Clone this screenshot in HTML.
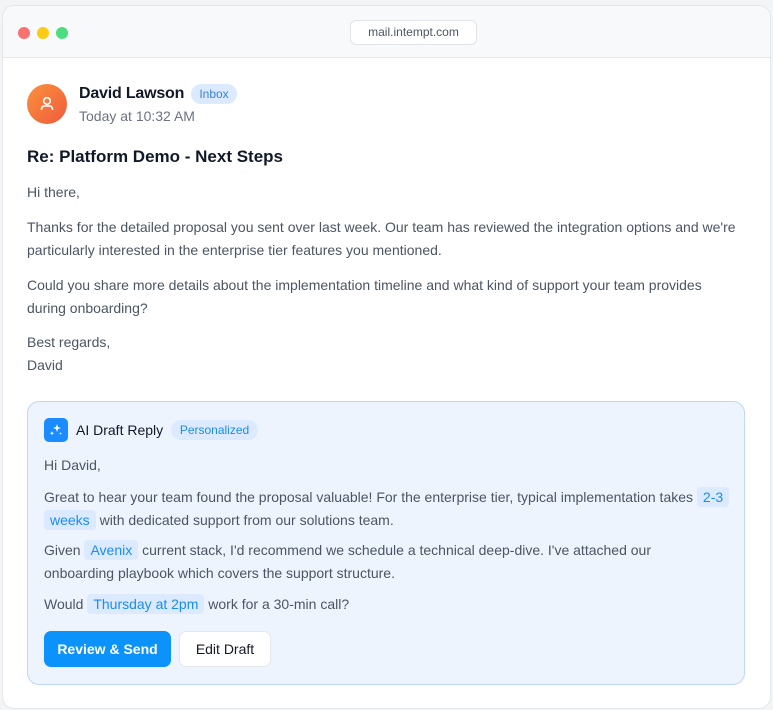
<!DOCTYPE html>
<html><head><meta charset="utf-8"><style>
*{margin:0;padding:0;box-sizing:border-box}
body{width:773px;height:710px;background:#f3f4f6;font-family:"Liberation Sans",sans-serif;position:relative;overflow:hidden;color:#4b5563}
.win{position:absolute;left:2px;top:5px;width:769px;height:704px;background:#fff;border:1px solid #e5e7eb;border-radius:12px;overflow:hidden}
.bar{height:52px;background:#f8f9fb;border-bottom:1px solid #e5e7eb;position:relative}
.dot{position:absolute;top:21px;width:12px;height:12px;border-radius:50%}
.url{position:absolute;left:347px;top:14px;width:127px;height:25px;border:1px solid #e2e4e8;border-radius:6px;background:#fff;font-size:12px;color:#4b5563;text-align:center;line-height:23px}
.a{position:absolute}
p.t{position:absolute;left:24px;font-size:14px;line-height:23px;color:#4b5563;white-space:nowrap}
.box{position:absolute;left:24px;top:395px;width:718px;height:284px;background:#eef4fe;border:1px solid #bcd7f8;border-radius:12px}
.h{background:#dbeafe;color:#1b8cf5;padding:2px 6px;border-radius:4px}
</style></head><body>
<div class="win">
<div class="bar">
<div class="dot" style="left:15px;background:#f87171"></div>
<div class="dot" style="left:34px;background:#facc15"></div>
<div class="dot" style="left:53px;background:#4ade80"></div>
<div class="url">mail.intempt.com</div>
</div>
<div class="a" style="left:24px;top:78px;width:40px;height:40px;border-radius:50%;background:linear-gradient(135deg,#fb923c,#ef5a3c)">
<svg width="40" height="40" viewBox="0 0 40 40" fill="none" stroke="#fff" stroke-width="1.6"><circle cx="20" cy="17" r="3.3"/><path d="M14.5 26v-1a3 3 0 0 1 3-3h5a3 3 0 0 1 3 3v1"/></svg></div>
<div class="a" style="left:76px;top:79px;font-size:16px;font-weight:bold;color:#111827;letter-spacing:-0.2px">David Lawson</div>
<div class="a" style="left:188px;top:78px;width:46px;height:20px;border-radius:10px;background:#dbeafe;color:#3b82d6;font-size:12px;line-height:20px;text-align:center">Inbox</div>
<div class="a" style="left:76px;top:102px;font-size:14px;color:#6b7280">Today at 10:32 AM</div>
<div class="a" style="left:24px;top:141px;font-size:17px;font-weight:bold;color:#111827">Re: Platform Demo - Next Steps</div>
<p class="t" style="top:175px">Hi there,</p>
<p class="t" style="top:210px">Thanks for the detailed proposal you sent over last week. Our team has reviewed the integration options and we're<br>particularly interested in the enterprise tier features you mentioned.</p>
<p class="t" style="top:268px">Could you share more details about the implementation timeline and what kind of support your team provides<br>during onboarding?</p>
<p class="t" style="top:325px">Best regards,<br>David</p>
<div class="box">
<div class="a" style="left:16px;top:16px;width:24px;height:24px;border-radius:5px;background:#1a8cff">
<svg width="24" height="24" viewBox="0 0 24 24" fill="#fff"><path d="M13 6l1 3 3 1-3 1-1 3-1-3-3-1 3-1z"/><path d="M8 13l.6 1.6 1.6.6-1.6.6L8 17.4l-.6-1.6-1.6-.6 1.6-.6z"/><circle cx="16.5" cy="15.5" r=".9"/></svg></div>
<div class="a" style="left:48px;top:20px;font-size:14px;color:#111827">AI Draft Reply</div>
<div class="a" style="left:143px;top:18px;width:87px;height:20px;border-radius:10px;background:#dbeafe;color:#1b8cf5;font-size:12px;line-height:20px;text-align:center">Personalized</div>
<p class="t" style="left:16px;top:52px">Hi David,</p>
<p class="t" style="left:16px;top:84px">Great to hear your team found the proposal valuable! For the enterprise tier, typical implementation takes <span class="h">2-3</span><br><span class="h">weeks</span> with dedicated support from our solutions team.</p>
<p class="t" style="left:16px;top:137px">Given <span class="h">Avenix</span> current stack, I'd recommend we schedule a technical deep-dive. I've attached our<br>onboarding playbook which covers the support structure.</p>
<p class="t" style="left:16px;top:191px">Would <span class="h">Thursday at 2pm</span> work for a 30-min call?</p>
<div class="a" style="left:16px;top:229px;width:127px;height:36px;border-radius:7px;background:#0c93fb;color:#fff;font-size:14px;font-weight:bold;line-height:36px;text-align:center">Review &amp; Send</div>
<div class="a" style="left:151px;top:229px;width:92px;height:36px;border-radius:7px;background:#fff;border:1px solid #e5e7eb;color:#111827;font-size:14px;line-height:34px;text-align:center">Edit Draft</div>
</div>
</div>
</body></html>
